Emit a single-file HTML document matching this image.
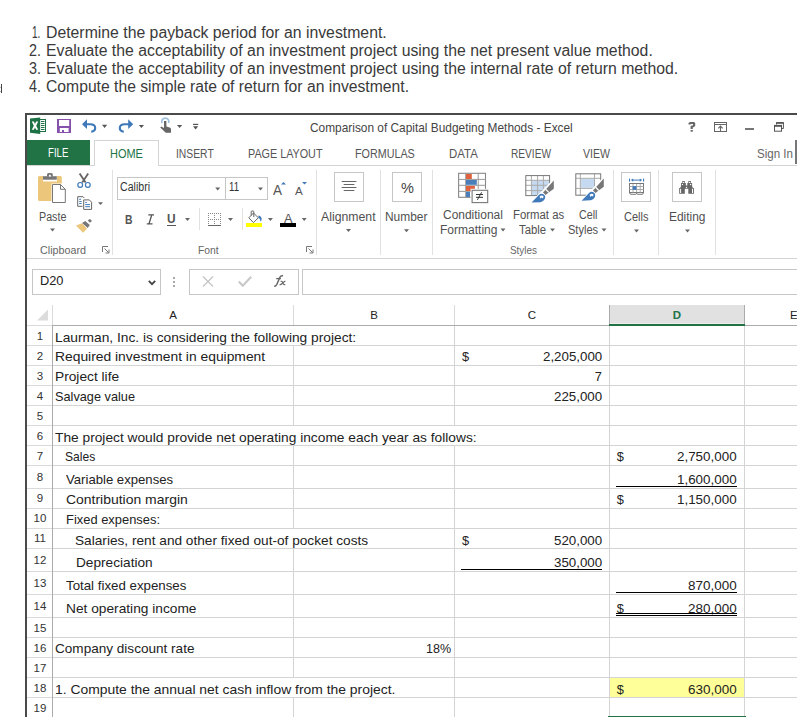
<!DOCTYPE html>
<html><head><meta charset="utf-8"><style>
html,body{margin:0;padding:0;background:#fff;width:797px;height:717px;overflow:hidden;}
body{position:relative;font-family:"Liberation Sans",sans-serif;}
svg{position:absolute;overflow:visible}
</style></head><body>
<div style="position:absolute;left:32.10px;top:22.53px;font-size:15.8px;line-height:20px;white-space:nowrap;color:#3a3a3a;transform:scaleX(0.6364);transform-origin:0 0;">1.</div>
<div style="position:absolute;left:46.00px;top:22.53px;font-size:15.8px;line-height:20px;white-space:nowrap;color:#3a3a3a;">Determine the payback period for an investment.</div>
<div style="position:absolute;left:28.50px;top:40.53px;font-size:15.8px;line-height:20px;white-space:nowrap;color:#3a3a3a;transform:scaleX(0.9091);transform-origin:0 0;">2.</div>
<div style="position:absolute;left:46.00px;top:40.53px;font-size:15.8px;line-height:20px;white-space:nowrap;color:#3a3a3a;">Evaluate the acceptability of an investment project using the net present value method.</div>
<div style="position:absolute;left:28.50px;top:58.53px;font-size:15.8px;line-height:20px;white-space:nowrap;color:#3a3a3a;transform:scaleX(0.9091);transform-origin:0 0;">3.</div>
<div style="position:absolute;left:46.00px;top:58.53px;font-size:15.8px;line-height:20px;white-space:nowrap;color:#3a3a3a;">Evaluate the acceptability of an investment project using the internal rate of return method.</div>
<div style="position:absolute;left:28.50px;top:76.53px;font-size:15.8px;line-height:20px;white-space:nowrap;color:#3a3a3a;transform:scaleX(0.9091);transform-origin:0 0;">4.</div>
<div style="position:absolute;left:46.00px;top:76.53px;font-size:15.8px;line-height:20px;white-space:nowrap;color:#3a3a3a;transform:scaleX(0.9938);transform-origin:0 0;">Compute the simple rate of return for an investment.</div>
<div style="position:absolute;left:1px;top:84px;width:1px;height:9px;background:#444"></div><div style="position:absolute;left:0;top:87px;width:1px;height:1px;background:#bbb"></div><div style="position:absolute;left:0;top:91px;width:1px;height:1px;background:#bbb"></div>
<div style="position:absolute;left:25px;top:113px;width:772px;height:2px;background:#4a4a4a;"></div>
<div style="position:absolute;left:25px;top:113px;width:2px;height:604px;background:#4a4a4a;"></div>
<div style="position:absolute;left:310.00px;top:117.93px;font-size:12.6px;line-height:20px;white-space:nowrap;color:#444;transform:scaleX(0.9431);transform-origin:0 0;">Comparison of Capital Budgeting Methods - Excel</div>
<div style="position:absolute;left:27px;top:140px;width:63px;height:25px;background:#217346;"></div>
<div style="position:absolute;left:47.50px;top:142.56px;font-size:12.8px;line-height:20px;white-space:nowrap;color:#fff;transform:scaleX(0.7542);transform-origin:0 0;">FILE</div>
<div style="position:absolute;left:94px;top:140px;width:1px;height:26px;background:#d4d4d4;"></div>
<div style="position:absolute;left:94px;top:140px;width:65px;height:1px;background:#d4d4d4;"></div>
<div style="position:absolute;left:158px;top:140px;width:1px;height:26px;background:#d4d4d4;"></div>
<div style="position:absolute;left:27px;top:165px;width:67px;height:1px;background:#d4d4d4;"></div>
<div style="position:absolute;left:159px;top:165px;width:638px;height:1px;background:#d4d4d4;"></div>
<div style="position:absolute;left:110.00px;top:143.56px;font-size:12.8px;line-height:20px;white-space:nowrap;color:#217346;transform:scaleX(0.8568);transform-origin:0 0;">HOME</div>
<div style="position:absolute;left:175.80px;top:143.56px;font-size:12.8px;line-height:20px;white-space:nowrap;color:#555;transform:scaleX(0.8073);transform-origin:0 0;">INSERT</div>
<div style="position:absolute;left:247.50px;top:143.56px;font-size:12.8px;line-height:20px;white-space:nowrap;color:#555;transform:scaleX(0.8423);transform-origin:0 0;">PAGE LAYOUT</div>
<div style="position:absolute;left:355.40px;top:143.56px;font-size:12.8px;line-height:20px;white-space:nowrap;color:#555;transform:scaleX(0.8411);transform-origin:0 0;">FORMULAS</div>
<div style="position:absolute;left:449.30px;top:143.56px;font-size:12.8px;line-height:20px;white-space:nowrap;color:#555;transform:scaleX(0.8930);transform-origin:0 0;">DATA</div>
<div style="position:absolute;left:511.00px;top:143.56px;font-size:12.8px;line-height:20px;white-space:nowrap;color:#555;transform:scaleX(0.7921);transform-origin:0 0;">REVIEW</div>
<div style="position:absolute;left:583.00px;top:143.56px;font-size:12.8px;line-height:20px;white-space:nowrap;color:#555;transform:scaleX(0.8257);transform-origin:0 0;">VIEW</div>
<div style="position:absolute;left:756.60px;top:143.56px;font-size:12.8px;line-height:20px;white-space:nowrap;color:#666;transform:scaleX(0.9034);transform-origin:0 0;">Sign In</div>
<div style="position:absolute;left:795px;top:140px;width:2px;height:24px;background:#777;"></div>
<div style="position:absolute;left:27px;top:258px;width:770px;height:1px;background:#d4d4d4;"></div>
<div style="position:absolute;left:38.50px;top:206.84px;font-size:12px;line-height:20px;white-space:nowrap;color:#505050;transform:scaleX(0.8925);transform-origin:0 0;">Paste</div>
<div style="position:absolute;left:39.60px;top:239.72px;font-size:11.5px;line-height:20px;white-space:nowrap;color:#666;transform:scaleX(0.9350);transform-origin:0 0;">Clipboard</div>
<div style="position:absolute;left:112px;top:170px;width:1px;height:85px;background:#e1e1e1;"></div>
<div style="position:absolute;left:117px;top:177px;width:107px;height:21px;border:1px solid #c6c6c6;"></div>
<div style="position:absolute;left:225px;top:177px;width:41px;height:21px;border:1px solid #c6c6c6;"></div>
<div style="position:absolute;left:120.20px;top:177.34px;font-size:12px;line-height:20px;white-space:nowrap;color:#333;transform:scaleX(0.8824);transform-origin:0 0;">Calibri</div>
<div style="position:absolute;left:229.00px;top:177.34px;font-size:12px;line-height:20px;white-space:nowrap;color:#333;transform:scaleX(0.8032);transform-origin:0 0;">11</div>
<div style="position:absolute;left:273.40px;top:179.80px;font-size:15px;line-height:20px;white-space:nowrap;color:#555;transform:scaleX(0.9000);transform-origin:0 0;">A</div>
<div style="position:absolute;left:295.00px;top:181.02px;font-size:11.5px;line-height:20px;white-space:nowrap;color:#555;transform:scaleX(1.0065);transform-origin:0 0;">A</div>
<div style="position:absolute;left:124.50px;top:209.67px;font-size:12.5px;line-height:20px;white-space:nowrap;color:#555;transform:scaleX(0.8287);transform-origin:0 0;font-weight:bold;">B</div>
<div style="position:absolute;left:167.40px;top:208.67px;font-size:12.5px;line-height:20px;white-space:nowrap;color:#555;transform:scaleX(0.9503);transform-origin:0 0;font-weight:bold;">U</div>
<div style="position:absolute;left:167.4px;top:224.6px;width:8.6px;height:1.2px;background:#555;"></div>
<div style="position:absolute;left:199px;top:208px;width:1px;height:22px;background:#e1e1e1;"></div>
<div style="position:absolute;left:242px;top:208px;width:1px;height:22px;background:#e1e1e1;"></div>
<div style="position:absolute;left:246px;top:223px;width:16px;height:3.6px;background:#ffff00;"></div>
<div style="position:absolute;left:283.70px;top:208.67px;font-size:12.5px;line-height:20px;white-space:nowrap;color:#555;transform:scaleX(1.0180);transform-origin:0 0;">A</div>
<div style="position:absolute;left:280px;top:223px;width:16px;height:3.6px;background:#000;"></div>
<div style="position:absolute;left:197.80px;top:239.72px;font-size:11.5px;line-height:20px;white-space:nowrap;color:#666;transform:scaleX(0.8957);transform-origin:0 0;">Font</div>
<div style="position:absolute;left:316px;top:170px;width:1px;height:85px;background:#e1e1e1;"></div>
<div style="position:absolute;left:334px;top:172px;width:28px;height:28px;border:1px solid #c6c6c6;"></div>
<div style="position:absolute;left:321.00px;top:207.34px;font-size:12px;line-height:20px;white-space:nowrap;color:#505050;transform:scaleX(1.0234);transform-origin:0 0;">Alignment</div>
<div style="position:absolute;left:380px;top:170px;width:1px;height:85px;background:#e1e1e1;"></div>
<div style="position:absolute;left:392px;top:172px;width:28px;height:28px;border:1px solid #c6c6c6;"></div>
<div style="position:absolute;left:401.00px;top:178.45px;font-size:14px;line-height:20px;white-space:nowrap;color:#444;transform:scaleX(1.0361);transform-origin:0 0;">%</div>
<div style="position:absolute;left:385.40px;top:207.34px;font-size:12px;line-height:20px;white-space:nowrap;color:#505050;transform:scaleX(0.9930);transform-origin:0 0;">Number</div>
<div style="position:absolute;left:432px;top:170px;width:1px;height:85px;background:#e1e1e1;"></div>
<div style="position:absolute;left:443.40px;top:205.34px;font-size:12px;line-height:20px;white-space:nowrap;color:#505050;transform:scaleX(0.9975);transform-origin:0 0;">Conditional</div>
<div style="position:absolute;left:439.50px;top:220.34px;font-size:12px;line-height:20px;white-space:nowrap;color:#505050;transform:scaleX(1.0026);transform-origin:0 0;">Formatting</div>
<div style="position:absolute;left:512.50px;top:205.34px;font-size:12px;line-height:20px;white-space:nowrap;color:#505050;transform:scaleX(0.9481);transform-origin:0 0;">Format as</div>
<div style="position:absolute;left:519.30px;top:220.34px;font-size:12px;line-height:20px;white-space:nowrap;color:#505050;transform:scaleX(0.9443);transform-origin:0 0;">Table</div>
<div style="position:absolute;left:578.80px;top:205.34px;font-size:12px;line-height:20px;white-space:nowrap;color:#505050;transform:scaleX(0.8910);transform-origin:0 0;">Cell</div>
<div style="position:absolute;left:567.50px;top:220.34px;font-size:12px;line-height:20px;white-space:nowrap;color:#505050;transform:scaleX(0.9205);transform-origin:0 0;">Styles</div>
<div style="position:absolute;left:509.60px;top:239.72px;font-size:11.5px;line-height:20px;white-space:nowrap;color:#666;transform:scaleX(0.8626);transform-origin:0 0;">Styles</div>
<div style="position:absolute;left:613px;top:170px;width:1px;height:85px;background:#e1e1e1;"></div>
<div style="position:absolute;left:621px;top:172px;width:28px;height:28px;border:1px solid #c6c6c6;"></div>
<div style="position:absolute;left:623.90px;top:207.34px;font-size:12px;line-height:20px;white-space:nowrap;color:#505050;transform:scaleX(0.9193);transform-origin:0 0;">Cells</div>
<div style="position:absolute;left:658px;top:170px;width:1px;height:85px;background:#e1e1e1;"></div>
<div style="position:absolute;left:672px;top:172px;width:28px;height:28px;border:1px solid #c6c6c6;"></div>
<div style="position:absolute;left:668.70px;top:207.34px;font-size:12px;line-height:20px;white-space:nowrap;color:#505050;transform:scaleX(0.9946);transform-origin:0 0;">Editing</div>
<div style="position:absolute;left:715px;top:170px;width:1px;height:85px;background:#e1e1e1;"></div>
<svg style="left:0;top:0" width="797" height="717" viewBox="0 0 797 717"><path d="M30 118.6 L40.2 117.4 L40.2 134 L30 132.8 Z" fill="#1e7145"/><rect x="40" y="119" width="6" height="13" fill="#1e7145"/><rect x="40.2" y="120" width="4.8" height="11" fill="#fff"/><rect x="41" y="121" width="3.5" height="1" fill="#1e7145"/><rect x="41" y="123" width="3.5" height="1" fill="#1e7145"/><rect x="41" y="125" width="3.5" height="1" fill="#1e7145"/><rect x="41" y="127" width="3.5" height="1" fill="#1e7145"/><rect x="41" y="129" width="3.5" height="1" fill="#1e7145"/><path d="M31.8 121.6 L33.9 121.6 L35 123.9 L36.1 121.6 L38.2 121.6 L36.2 125.7 L38.2 129.8 L36.1 129.8 L35 127.5 L33.9 129.8 L31.8 129.8 L33.8 125.7 Z" fill="#fff"/><path d="M57 119 H71 V133 H57 Z M59 120.1 V125.9 H69.2 V120.1 Z M59.8 128 V132 H62 V129.9 H64 V132 H68.6 V128 Z" fill="#8551ac" fill-rule="evenodd"/><path d="M84.5 124.2 H90.3 C93.8 124.2 95.2 126.2 95.2 128.1 C95.2 130.3 93.6 131.5 91.2 131.7" fill="none" stroke="#3f79ba" stroke-width="2.1"/><path d="M82 124.2 L87 119.3 L87 129.1 Z" fill="#3f79ba"/><path d="M102 124.8 H107.2 L104.6 128.0 Z" fill="#555"/><path d="M130.5 124.2 H124.7 C121.2 124.2 119.8 126.2 119.8 128.1 C119.8 130.3 121.4 131.5 123.8 131.7" fill="none" stroke="#3f79ba" stroke-width="2.1"/><path d="M133.2 124.2 L128.2 119.3 L128.2 129.1 Z" fill="#3f79ba"/><path d="M138.8 124.9 H144.0 L141.4 128.1 Z" fill="#555"/><path d="M162 123.2 A3.6 3.6 0 1 1 168.6 123.2" fill="none" stroke="#9ec0e0" stroke-width="1.7"/><path d="M164 120.9 H166.4 V126.5 L169.6 127.4 C170.6 127.8 171 128.4 171 129.4 V132.8 H165.8 L160.2 127.5 L161.2 126.6 L164 128 Z" fill="#666"/><path d="M177 124.9 H182.2 L179.6 128.1 Z" fill="#555"/><rect x="193" y="123.8" width="5.2" height="1.2" fill="#555"/><path d="M193 126.3 H198.2 L195.6 129.6 Z" fill="#555"/><path d="M688.5 124.5 V123 L690 122 H694 L695.2 123 V126 L693.5 127.2 H692.8 V129 H690.6 V126.2 L691.6 125.6 H693 V123.9 H690.7 V124.5 Z" fill="#666"/><rect x="690.6" y="130" width="2.2" height="1.7" fill="#666"/><rect x="714.5" y="122.5" width="12" height="9" fill="none" stroke="#666" stroke-width="1"/><path d="M714.5 124.5 H726.5" stroke="#666" stroke-width="1"/><path d="M720.5 126 V131.5 M718.3 128.3 L720.5 126.1 L722.7 128.3" fill="none" stroke="#666" stroke-width="1.1"/><rect x="745" y="128.2" width="9" height="1.6" fill="#555"/><path d="M776.5 124.5 V122.6 H783.4 V128.5 H781.6" fill="none" stroke="#555" stroke-width="1"/><rect x="776.2" y="122.2" width="7.5" height="1.6" fill="#555"/><rect x="774.5" y="125.4" width="7" height="5.8" fill="#fff" stroke="#555" stroke-width="1"/><rect x="774.2" y="125.1" width="7.6" height="1.7" fill="#555"/><path d="M39.5 176 H43 V181.5 H57 V176 H60.3 Q61.8 176 61.8 177.5 V183.5 H51.5 V201 H39.5 Q38 201 38 199.5 V177.5 Q38 176 39.5 176 Z" fill="#ecc67a"/><path d="M43 176.2 H56.8 V179.7 H43 Z" fill="#777"/><path d="M47 176.5 V174.5 Q47 173 48.5 173 H51.3 Q52.8 173 52.8 174.5 V176.5 Z" fill="#777"/><rect x="49" y="174.8" width="1.8" height="1.8" fill="#fff"/><path d="M52.5 184.5 H60.5 L65.3 189.3 V202.5 H52.5 Z" fill="#fff" stroke="#777" stroke-width="1"/><path d="M60.5 184.5 V189.3 H65.3" fill="none" stroke="#777" stroke-width="1"/><path d="M50 228.5 H55 L52.5 231.5 Z" fill="#666"/><path d="M79.6 173.4 L85.6 182.6 M88.2 173.4 L82.2 182.6" stroke="#666" stroke-width="1.8" fill="none"/><circle cx="80.2" cy="184.9" r="2.4" fill="#fff" stroke="#3f79ba" stroke-width="1.2"/><circle cx="87.8" cy="184.9" r="2.4" fill="#fff" stroke="#3f79ba" stroke-width="1.2"/><path d="M77.7 206.3 V196.7 H83 L84.3 198" fill="none" stroke="#666" stroke-width="1"/><path d="M77.7 206.3 H82.5" fill="none" stroke="#666" stroke-width="1"/><path d="M79.2 199.3 H81 M79.2 201.5 H81.6 M79.2 203.5 H81.6" stroke="#3f79ba" stroke-width="1"/><path d="M83.7 199.9 H89.3 L91.6 202.2 V209.4 H83.7 Z" fill="#fff" stroke="#666" stroke-width="1"/><path d="M85.2 202.4 H86.9 M85.2 204.6 H90 M85.2 206.7 H90" stroke="#3f79ba" stroke-width="1"/><path d="M98 202.2 H103 L100.5 205.0 Z" fill="#666"/><path d="M76 225.5 L82.1 223.3 L87 228.8 L83 232.8 Z" fill="#ecc67a"/><path d="M82.1 223 L85.2 220.9 L89.8 225.1 L87.7 227.9 Z" fill="#777"/><path d="M87.7 220.2 L90.1 219 L92 220.9 L89.8 222.7 Z" fill="#777"/><path d="M102.5 252 V246.5 H108" fill="none" stroke="#777" stroke-width="1"/><path d="M104.5 248.5 L108.5 252.5 M109 249.5 V253 H105.5" fill="none" stroke="#777" stroke-width="1"/><path d="M215.2 187.5 H220.2 L217.7 190.5 Z" fill="#666"/><path d="M258 187.5 H263 L260.5 190.5 Z" fill="#666"/><path d="M281 184.5 H286 L283.5 182 Z" fill="#3f79ba"/><path d="M302 182 H307 L304.5 184.5 Z" fill="#3f79ba"/><path d="M148.3 214.8 H154 M146.8 223.8 H152.5 M151.8 214.8 L149 223.8" stroke="#555" stroke-width="1.3" fill="none"/><path d="M185 218 H190 L187.5 221 Z" fill="#666"/><rect x="208" y="213" width="1" height="1" fill="#888"/><rect x="208" y="219" width="1" height="1" fill="#888"/><rect x="210" y="213" width="1" height="1" fill="#888"/><rect x="210" y="219" width="1" height="1" fill="#888"/><rect x="212" y="213" width="1" height="1" fill="#888"/><rect x="212" y="219" width="1" height="1" fill="#888"/><rect x="214" y="213" width="1" height="1" fill="#888"/><rect x="214" y="219" width="1" height="1" fill="#888"/><rect x="216" y="213" width="1" height="1" fill="#888"/><rect x="216" y="219" width="1" height="1" fill="#888"/><rect x="218" y="213" width="1" height="1" fill="#888"/><rect x="218" y="219" width="1" height="1" fill="#888"/><rect x="220" y="213" width="1" height="1" fill="#888"/><rect x="220" y="219" width="1" height="1" fill="#888"/><rect x="208" y="213" width="1" height="1" fill="#888"/><rect x="214" y="213" width="1" height="1" fill="#888"/><rect x="220" y="213" width="1" height="1" fill="#888"/><rect x="208" y="215" width="1" height="1" fill="#888"/><rect x="214" y="215" width="1" height="1" fill="#888"/><rect x="220" y="215" width="1" height="1" fill="#888"/><rect x="208" y="217" width="1" height="1" fill="#888"/><rect x="214" y="217" width="1" height="1" fill="#888"/><rect x="220" y="217" width="1" height="1" fill="#888"/><rect x="208" y="219" width="1" height="1" fill="#888"/><rect x="214" y="219" width="1" height="1" fill="#888"/><rect x="220" y="219" width="1" height="1" fill="#888"/><rect x="208" y="221" width="1" height="1" fill="#888"/><rect x="214" y="221" width="1" height="1" fill="#888"/><rect x="220" y="221" width="1" height="1" fill="#888"/><rect x="208" y="223" width="1" height="1" fill="#888"/><rect x="214" y="223" width="1" height="1" fill="#888"/><rect x="220" y="223" width="1" height="1" fill="#888"/><rect x="208" y="225" width="13" height="1" fill="#666"/><path d="M228 218 H233 L230.5 221 Z" fill="#666"/><path d="M248.8 217.8 L253.5 213 L258.3 217.8 L253.5 222.6 Z" fill="#fff" stroke="#666" stroke-width="1"/><path d="M251.2 215.5 V211.8 Q251.2 211 252 211 H253 Q253.8 211 253.8 211.8 V217" fill="none" stroke="#666" stroke-width="1"/><path d="M258.4 215.4 C260.8 216 262 217.5 261.6 220.2 L260 221.5 C260.6 219.5 259.8 218.4 258.4 218 Z" fill="#3f79ba"/><path d="M267.9 218 H272.9 L270.4 221 Z" fill="#666"/><path d="M301.7 218 H306.7 L304.2 221 Z" fill="#666"/><path d="M306.5 252 V246.5 H312" fill="none" stroke="#777" stroke-width="1"/><path d="M308.5 248.5 L312.5 252.5 M313 249.5 V253 H309.5" fill="none" stroke="#777" stroke-width="1"/><path d="M341.7 181.5 H356.4 M343.7 184.5 H354.4 M341.7 187.5 H356.4 M343.7 190.5 H354.4" stroke="#666" stroke-width="1"/><path d="M346 229 H351 L348.5 232 Z" fill="#666"/><path d="M404 229.2 H409 L406.5 232.2 Z" fill="#666"/><rect x="458.6" y="173.3" width="26.9" height="24" fill="#fff" stroke="#888" stroke-width="1.1"/><path d="M465.7 173.3 V197.3 M478.2 173.3 V197.3 M458.6 179.4 H485.5 M458.6 185.3 H485.5 M458.6 191.4 H485.5" stroke="#999" stroke-width="1"/><rect x="466" y="174" width="5.8" height="5" fill="#e0623e"/><rect x="466" y="180" width="10.8" height="4.8" fill="#4a7ebb"/><rect x="466" y="186" width="8.9" height="5" fill="#e0623e"/><rect x="466" y="192" width="4" height="5" fill="#4a7ebb"/><rect x="472.1" y="190.3" width="15.6" height="12.3" fill="#fff" stroke="#fff" stroke-width="3"/><rect x="472.1" y="190.3" width="15.6" height="12.3" fill="#fff" stroke="#777" stroke-width="1.1"/><path d="M476 194.5 H483 M476 197.3 H483 M481.6 192.3 L477.4 199.8" stroke="#333" stroke-width="1"/><path d="M500.5 228.5 H505.5 L503.0 231.5 Z" fill="#666"/><rect x="525.8" y="175.6" width="23.8" height="20" fill="#fff"/><rect x="531.4" y="180.3" width="18.2" height="15.3" fill="#c5d9f1"/><path d="M531.4 175.6 V195.6 M537.6 175.6 V195.6 M543.4 175.6 V195.6 M525.8 180.3 H549.6 M525.8 185.3 H549.6 M525.8 190.6 H549.6" stroke="#aaa" stroke-width="1"/><rect x="525.8" y="175.6" width="23.8" height="20" fill="none" stroke="#777" stroke-width="1"/><path d="M536.30 196.80 L551.00 181.50 L552.60 181.50 L552.60 198.00 L536.30 198.00 Z" fill="#fff"/><path d="M553.80 180.40 L553.80 188.70 L545.40 194.90 L543.00 192.40 Z" fill="#777" stroke="#fff" stroke-width="1.6" paint-order="stroke"/><path d="M545.60 189.20 L548.80 192.40" stroke="#fff" stroke-width="1.3"/><path d="M531.60 202.60 L539.30 194.60 C541.00 193.00 544.60 193.60 545.10 196.60 C545.40 199.20 543.40 201.60 540.50 202.20 Z" fill="#3f79ba" stroke="#fff" stroke-width="1.6" paint-order="stroke"/><path d="M539.60 196.80 C540.60 195.40 542.60 195.20 543.50 196.40 L543.00 198.40 L541.60 197.60 L540.60 198.80 Z" fill="#fff"/><path d="M550 228.5 H555 L552.5 231.5 Z" fill="#666"/><rect x="575.8" y="173.8" width="24.9" height="21.4" fill="#fff"/><rect x="580.9" y="178.9" width="13.1" height="8.9" fill="#c5d9f1"/><path d="M580.3 173.8 V195.2 M594.5 173.8 V195.2 M575.8 178.3 H600.7 M575.8 188.4 H600.7" stroke="#aaa" stroke-width="1"/><rect x="575.8" y="173.8" width="24.9" height="21.4" fill="none" stroke="#777" stroke-width="1"/><path d="M586.30 194.90 L601.00 179.60 L602.60 179.60 L602.60 196.10 L586.30 196.10 Z" fill="#fff"/><path d="M603.80 178.50 L603.80 186.80 L595.40 193.00 L593.00 190.50 Z" fill="#777" stroke="#fff" stroke-width="1.6" paint-order="stroke"/><path d="M595.60 187.30 L598.80 190.50" stroke="#fff" stroke-width="1.3"/><path d="M581.60 200.70 L589.30 192.70 C591.00 191.10 594.60 191.70 595.10 194.70 C595.40 197.30 593.40 199.70 590.50 200.30 Z" fill="#3f79ba" stroke="#fff" stroke-width="1.6" paint-order="stroke"/><path d="M589.60 194.90 C590.60 193.50 592.60 193.30 593.50 194.50 L593.00 196.50 L591.60 195.70 L590.60 196.90 Z" fill="#fff"/><path d="M601.5 228.5 H606.5 L604.0 231.5 Z" fill="#666"/><rect x="629" y="178.6" width="1.1" height="3" fill="#3f79ba"/><rect x="643" y="178.6" width="1.1" height="3" fill="#3f79ba"/><path d="M632 180.1 H641" stroke="#3f79ba" stroke-width="1"/><path d="M633.2 178.4 L630.9 180.1 L633.2 181.8 Z M639.8 178.4 L642.1 180.1 L639.8 181.8 Z" fill="#3f79ba"/><rect x="629.5" y="183.5" width="14" height="9" fill="#fff" stroke="#777" stroke-width="1"/><path d="M633 183.5 V192.5 M636.6 183.5 V192.5 M640.2 183.5 V192.5 M629.5 186.5 H643.5 M629.5 189.5 H643.5" stroke="#aaa" stroke-width="1"/><path d="M629.5 183.5 H643.5" stroke="#777" stroke-width="1"/><rect x="632.6" y="186.2" width="3.8" height="3.6" fill="#3f79ba"/><path d="M629.6 192.6 Q629.6 194.3 631 194.3 H635.8 Q636.6 194.3 636.6 192.8 Q636.6 194.3 637.6 194.3 H642 Q643.4 194.3 643.4 192.6" fill="none" stroke="#777" stroke-width="1"/><path d="M634 229.5 H639 L636.5 232.5 Z" fill="#666"/><path d="M679.2 193.8 V188.1 H680.4 V186.8 H681 V183 H682.2 V181.1 H684.8 V183 H685.8 V185.5 H687.3 V183 H688.3 V181.1 H690.9 V183 H692.1 V186.8 H692.7 V188.1 H693.9 V193.8 H688.3 V188.7 H684.8 V193.8 Z" fill="#666"/><rect x="680.1" y="188.8" width="1" height="4.2" fill="#fff"/><rect x="692" y="188.8" width="1" height="4.2" fill="#fff"/><circle cx="683.5" cy="182.4" r="0.7" fill="#fff"/><circle cx="682.5" cy="184.5" r="0.7" fill="#fff"/><circle cx="686.5" cy="187.4" r="0.7" fill="#fff"/><circle cx="689.6" cy="182.4" r="0.7" fill="#fff"/><circle cx="690.6" cy="184.5" r="0.7" fill="#fff"/><path d="M685 229.5 H690 L687.5 232.5 Z" fill="#666"/></svg>
<div style="position:absolute;left:32px;top:269px;width:127px;height:24px;border:1px solid #c6c6c6;background:#fff"></div>
<div style="position:absolute;left:39.80px;top:270.67px;font-size:12.5px;line-height:20px;white-space:nowrap;color:#222;transform:scaleX(1.0240);transform-origin:0 0;">D20</div>
<svg style="left:147.5px;top:279.5px" width="8" height="6" viewBox="0 0 8 6"><path d="M0.8 0.8 L4 4.2 L7.2 0.8" fill="none" stroke="#444" stroke-width="1.8"/></svg>
<div style="position:absolute;left:173px;top:277px;width:1.5px;height:1.5px;background:#aaa;"></div>
<div style="position:absolute;left:173px;top:281px;width:1.5px;height:1.5px;background:#aaa;"></div>
<div style="position:absolute;left:173px;top:285px;width:1.5px;height:1.5px;background:#aaa;"></div>
<div style="position:absolute;left:189px;top:269px;width:108px;height:24px;border:1px solid #c6c6c6;background:#fff"></div>
<svg style="left:202px;top:276px" width="12" height="11" viewBox="0 0 12 11"><path d="M1 0.5 L11 10.5 M11 0.5 L1 10.5" stroke="#c4c4c4" stroke-width="1.2"/></svg>
<svg style="left:237.5px;top:276px" width="14" height="11" viewBox="0 0 14 11"><path d="M0.8 5.5 L4.8 9.8 L13.2 0.8" fill="none" stroke="#c8c8c8" stroke-width="2.1"/></svg>
<svg style="left:0;top:0" width="797" height="717"><path d="M274.3 286 Q275.8 286.6 276.9 284.2 L279.9 277.2 Q280.8 275.3 283 275.7" fill="none" stroke="#666" stroke-width="1.5"/><path d="M276.2 278.6 H280.9" stroke="#666" stroke-width="1.3"/><path d="M280.6 281.3 Q282 281 282.6 282.3 L283.4 284 Q283.8 284.8 285.3 284.5 M285.4 281.4 Q284.6 281.2 283.2 282.6 L281.6 284 Q280.8 284.8 279.6 284.6" fill="none" stroke="#666" stroke-width="1.2"/></svg>
<div style="position:absolute;left:302px;top:269px;width:520px;height:24px;border:1px solid #c6c6c6;background:#fff"></div>
<svg style="left:36px;top:309px" width="13" height="12" viewBox="0 0 13 12"><path d="M12 0.5 V11.5 H1 Z" fill="#dcdcdc"/></svg>
<div style="position:absolute;left:610px;top:305px;width:134px;height:18px;background:#e1e1e1;"></div>
<div style="position:absolute;left:610px;top:323px;width:134px;height:1px;background:#f0ecec;"></div>
<div style="position:absolute;left:52px;top:305px;width:1px;height:20px;background:#dadada;"></div>
<div style="position:absolute;left:293px;top:305px;width:1px;height:20px;background:#dadada;"></div>
<div style="position:absolute;left:454px;top:305px;width:1px;height:20px;background:#dadada;"></div>
<div style="position:absolute;left:609px;top:305px;width:1px;height:20px;background:#ababab;"></div>
<div style="position:absolute;left:744px;top:305px;width:1px;height:20px;background:#ababab;"></div>
<div style="position:absolute;left:27px;top:325px;width:25px;height:1px;background:#dadada;"></div>
<div style="position:absolute;left:52px;top:325px;width:558px;height:1px;background:#ababab;"></div>
<div style="position:absolute;left:744px;top:325px;width:53px;height:1px;background:#ababab;"></div>
<div style="position:absolute;left:609px;top:324px;width:136px;height:2px;background:#217346;"></div>
<div style="position:absolute;left:27px;top:345px;width:25px;height:1px;background:#dadada;"></div>
<div style="position:absolute;left:53px;top:345px;width:744px;height:1px;background:#d4d4d4;"></div>
<div style="position:absolute;left:27px;top:365px;width:25px;height:1px;background:#dadada;"></div>
<div style="position:absolute;left:53px;top:365px;width:744px;height:1px;background:#d4d4d4;"></div>
<div style="position:absolute;left:27px;top:385px;width:25px;height:1px;background:#dadada;"></div>
<div style="position:absolute;left:53px;top:385px;width:744px;height:1px;background:#d4d4d4;"></div>
<div style="position:absolute;left:27px;top:405px;width:25px;height:1px;background:#dadada;"></div>
<div style="position:absolute;left:53px;top:405px;width:744px;height:1px;background:#d4d4d4;"></div>
<div style="position:absolute;left:27px;top:425px;width:25px;height:1px;background:#dadada;"></div>
<div style="position:absolute;left:53px;top:425px;width:744px;height:1px;background:#d4d4d4;"></div>
<div style="position:absolute;left:27px;top:445px;width:25px;height:1px;background:#dadada;"></div>
<div style="position:absolute;left:53px;top:445px;width:744px;height:1px;background:#d4d4d4;"></div>
<div style="position:absolute;left:27px;top:465px;width:25px;height:1px;background:#dadada;"></div>
<div style="position:absolute;left:53px;top:465px;width:744px;height:1px;background:#d4d4d4;"></div>
<div style="position:absolute;left:27px;top:488px;width:25px;height:1px;background:#dadada;"></div>
<div style="position:absolute;left:53px;top:488px;width:744px;height:1px;background:#d4d4d4;"></div>
<div style="position:absolute;left:27px;top:508px;width:25px;height:1px;background:#dadada;"></div>
<div style="position:absolute;left:53px;top:508px;width:744px;height:1px;background:#d4d4d4;"></div>
<div style="position:absolute;left:27px;top:528px;width:25px;height:1px;background:#dadada;"></div>
<div style="position:absolute;left:53px;top:528px;width:744px;height:1px;background:#d4d4d4;"></div>
<div style="position:absolute;left:27px;top:548px;width:25px;height:1px;background:#dadada;"></div>
<div style="position:absolute;left:53px;top:548px;width:744px;height:1px;background:#d4d4d4;"></div>
<div style="position:absolute;left:27px;top:571px;width:25px;height:1px;background:#dadada;"></div>
<div style="position:absolute;left:53px;top:571px;width:744px;height:1px;background:#d4d4d4;"></div>
<div style="position:absolute;left:27px;top:594px;width:25px;height:1px;background:#dadada;"></div>
<div style="position:absolute;left:53px;top:594px;width:744px;height:1px;background:#d4d4d4;"></div>
<div style="position:absolute;left:27px;top:617px;width:25px;height:1px;background:#dadada;"></div>
<div style="position:absolute;left:53px;top:617px;width:744px;height:1px;background:#d4d4d4;"></div>
<div style="position:absolute;left:27px;top:637px;width:25px;height:1px;background:#dadada;"></div>
<div style="position:absolute;left:53px;top:637px;width:744px;height:1px;background:#d4d4d4;"></div>
<div style="position:absolute;left:27px;top:657px;width:25px;height:1px;background:#dadada;"></div>
<div style="position:absolute;left:53px;top:657px;width:744px;height:1px;background:#d4d4d4;"></div>
<div style="position:absolute;left:27px;top:677px;width:25px;height:1px;background:#dadada;"></div>
<div style="position:absolute;left:53px;top:677px;width:744px;height:1px;background:#d4d4d4;"></div>
<div style="position:absolute;left:27px;top:697px;width:25px;height:1px;background:#dadada;"></div>
<div style="position:absolute;left:53px;top:697px;width:744px;height:1px;background:#d4d4d4;"></div>
<div style="position:absolute;left:27px;top:717px;width:25px;height:1px;background:#dadada;"></div>
<div style="position:absolute;left:53px;top:717px;width:744px;height:1px;background:#d4d4d4;"></div>
<div style="position:absolute;left:52px;top:326px;width:1px;height:391px;background:#ababab;"></div>
<div style="position:absolute;left:293px;top:345px;width:1px;height:81px;background:#d4d4d4;"></div>
<div style="position:absolute;left:293px;top:445px;width:1px;height:84px;background:#d4d4d4;"></div>
<div style="position:absolute;left:293px;top:548px;width:1px;height:130px;background:#d4d4d4;"></div>
<div style="position:absolute;left:293px;top:697px;width:1px;height:20px;background:#d4d4d4;"></div>
<div style="position:absolute;left:454px;top:326px;width:1px;height:100px;background:#d4d4d4;"></div>
<div style="position:absolute;left:454px;top:445px;width:1px;height:272px;background:#d4d4d4;"></div>
<div style="position:absolute;left:609px;top:326px;width:1px;height:391px;background:#d4d4d4;"></div>
<div style="position:absolute;left:744px;top:326px;width:1px;height:391px;background:#d4d4d4;"></div>
<div style="position:absolute;left:169.18px;top:305.02px;font-size:11.5px;line-height:20px;white-space:nowrap;color:#222;">A</div>
<div style="position:absolute;left:370.18px;top:305.02px;font-size:11.5px;line-height:20px;white-space:nowrap;color:#222;">B</div>
<div style="position:absolute;left:527.85px;top:305.02px;font-size:11.5px;line-height:20px;white-space:nowrap;color:#222;">C</div>
<div style="position:absolute;left:672.85px;top:305.02px;font-size:11.5px;line-height:20px;white-space:nowrap;color:#217346;font-weight:bold;">D</div>
<div style="position:absolute;left:790.10px;top:305.02px;font-size:11.5px;line-height:20px;white-space:nowrap;color:#222;">E</div>
<div style="position:absolute;left:36.80px;top:326.02px;font-size:11.5px;line-height:20px;white-space:nowrap;color:#333;">1</div>
<div style="position:absolute;left:36.80px;top:346.02px;font-size:11.5px;line-height:20px;white-space:nowrap;color:#333;">2</div>
<div style="position:absolute;left:36.80px;top:366.02px;font-size:11.5px;line-height:20px;white-space:nowrap;color:#333;">3</div>
<div style="position:absolute;left:36.80px;top:386.02px;font-size:11.5px;line-height:20px;white-space:nowrap;color:#333;">4</div>
<div style="position:absolute;left:36.80px;top:406.02px;font-size:11.5px;line-height:20px;white-space:nowrap;color:#333;">5</div>
<div style="position:absolute;left:36.80px;top:426.02px;font-size:11.5px;line-height:20px;white-space:nowrap;color:#333;">6</div>
<div style="position:absolute;left:36.80px;top:446.02px;font-size:11.5px;line-height:20px;white-space:nowrap;color:#333;">7</div>
<div style="position:absolute;left:36.80px;top:467.02px;font-size:11.5px;line-height:20px;white-space:nowrap;color:#333;">8</div>
<div style="position:absolute;left:36.80px;top:488.02px;font-size:11.5px;line-height:20px;white-space:nowrap;color:#333;">9</div>
<div style="position:absolute;left:33.60px;top:508.02px;font-size:11.5px;line-height:20px;white-space:nowrap;color:#333;">10</div>
<div style="position:absolute;left:34.02px;top:528.02px;font-size:11.5px;line-height:20px;white-space:nowrap;color:#333;">11</div>
<div style="position:absolute;left:33.60px;top:550.02px;font-size:11.5px;line-height:20px;white-space:nowrap;color:#333;">12</div>
<div style="position:absolute;left:33.60px;top:573.02px;font-size:11.5px;line-height:20px;white-space:nowrap;color:#333;">13</div>
<div style="position:absolute;left:33.60px;top:596.02px;font-size:11.5px;line-height:20px;white-space:nowrap;color:#333;">14</div>
<div style="position:absolute;left:33.60px;top:618.02px;font-size:11.5px;line-height:20px;white-space:nowrap;color:#333;">15</div>
<div style="position:absolute;left:33.60px;top:638.02px;font-size:11.5px;line-height:20px;white-space:nowrap;color:#333;">16</div>
<div style="position:absolute;left:33.60px;top:658.02px;font-size:11.5px;line-height:20px;white-space:nowrap;color:#333;">17</div>
<div style="position:absolute;left:33.60px;top:678.02px;font-size:11.5px;line-height:20px;white-space:nowrap;color:#333;">18</div>
<div style="position:absolute;left:33.60px;top:698.02px;font-size:11.5px;line-height:20px;white-space:nowrap;color:#333;">19</div>
<div style="position:absolute;left:610px;top:678px;width:134px;height:19px;background:#ffff99;"></div>
<div style="position:absolute;left:608px;top:716px;width:138px;height:2px;background:#217346;"></div>
<div style="position:absolute;left:55.30px;top:327.56px;font-size:12.8px;line-height:20px;white-space:nowrap;color:#222;transform:scaleX(1.0747);transform-origin:0 0;">Laurman, Inc. is considering the following project:</div>
<div style="position:absolute;left:55.20px;top:346.56px;font-size:12.8px;line-height:20px;white-space:nowrap;color:#222;transform:scaleX(1.0821);transform-origin:0 0;">Required investment in equipment</div>
<div style="position:absolute;left:55.20px;top:366.56px;font-size:12.8px;line-height:20px;white-space:nowrap;color:#222;transform:scaleX(1.0728);transform-origin:0 0;">Project life</div>
<div style="position:absolute;left:55.20px;top:386.56px;font-size:12.8px;line-height:20px;white-space:nowrap;color:#222;transform:scaleX(0.9950);transform-origin:0 0;">Salvage value</div>
<div style="position:absolute;left:55.30px;top:427.56px;font-size:12.8px;line-height:20px;white-space:nowrap;color:#222;transform:scaleX(1.0737);transform-origin:0 0;">The project would provide net operating income each year as follows:</div>
<div style="position:absolute;left:65.00px;top:446.56px;font-size:12.8px;line-height:20px;white-space:nowrap;color:#222;transform:scaleX(0.9437);transform-origin:0 0;">Sales</div>
<div style="position:absolute;left:65.70px;top:469.56px;font-size:12.8px;line-height:20px;white-space:nowrap;color:#222;transform:scaleX(1.0264);transform-origin:0 0;">Variable expenses</div>
<div style="position:absolute;left:65.50px;top:489.56px;font-size:12.8px;line-height:20px;white-space:nowrap;color:#222;transform:scaleX(1.0904);transform-origin:0 0;">Contribution margin</div>
<div style="position:absolute;left:65.70px;top:509.56px;font-size:12.8px;line-height:20px;white-space:nowrap;color:#222;transform:scaleX(1.0086);transform-origin:0 0;">Fixed expenses:</div>
<div style="position:absolute;left:75.10px;top:530.56px;font-size:12.8px;line-height:20px;white-space:nowrap;color:#222;transform:scaleX(1.0675);transform-origin:0 0;">Salaries, rent and other fixed out-of pocket costs</div>
<div style="position:absolute;left:75.70px;top:552.56px;font-size:12.8px;line-height:20px;white-space:nowrap;color:#222;transform:scaleX(1.0675);transform-origin:0 0;">Depreciation</div>
<div style="position:absolute;left:65.70px;top:575.56px;font-size:12.8px;line-height:20px;white-space:nowrap;color:#222;transform:scaleX(1.0379);transform-origin:0 0;">Total fixed expenses</div>
<div style="position:absolute;left:65.70px;top:598.56px;font-size:12.8px;line-height:20px;white-space:nowrap;color:#222;transform:scaleX(1.0727);transform-origin:0 0;">Net operating income</div>
<div style="position:absolute;left:54.80px;top:638.56px;font-size:12.8px;line-height:20px;white-space:nowrap;color:#222;transform:scaleX(1.0596);transform-origin:0 0;">Company discount rate</div>
<div style="position:absolute;left:55.00px;top:679.56px;font-size:12.8px;line-height:20px;white-space:nowrap;color:#222;transform:scaleX(1.0851);transform-origin:0 0;">1. Compute the annual net cash inflow from the project.</div>
<div style="position:absolute;left:425.90px;top:638.56px;font-size:12.8px;line-height:20px;white-space:nowrap;color:#222;transform:scaleX(0.9805);transform-origin:0 0;">18%</div>
<div style="position:absolute;left:542.50px;top:346.56px;font-size:12.8px;line-height:20px;white-space:nowrap;color:#222;transform:scaleX(1.0413);transform-origin:0 0;">2,205,000</div>
<div style="position:absolute;left:594.70px;top:366.56px;font-size:12.8px;line-height:20px;white-space:nowrap;color:#222;">7</div>
<div style="position:absolute;left:553.60px;top:386.56px;font-size:12.8px;line-height:20px;white-space:nowrap;color:#222;transform:scaleX(1.0422);transform-origin:0 0;">225,000</div>
<div style="position:absolute;left:553.60px;top:530.56px;font-size:12.8px;line-height:20px;white-space:nowrap;color:#222;transform:scaleX(1.0422);transform-origin:0 0;">520,000</div>
<div style="position:absolute;left:553.60px;top:552.56px;font-size:12.8px;line-height:20px;white-space:nowrap;color:#222;transform:scaleX(1.0422);transform-origin:0 0;">350,000</div>
<div style="position:absolute;left:462.00px;top:346.56px;font-size:12.8px;line-height:20px;white-space:nowrap;color:#222;">$</div>
<div style="position:absolute;left:462.00px;top:530.56px;font-size:12.8px;line-height:20px;white-space:nowrap;color:#222;">$</div>
<div style="position:absolute;left:677.20px;top:446.56px;font-size:12.8px;line-height:20px;white-space:nowrap;color:#222;transform:scaleX(1.0465);transform-origin:0 0;">2,750,000</div>
<div style="position:absolute;left:677.20px;top:469.56px;font-size:12.8px;line-height:20px;white-space:nowrap;color:#222;transform:scaleX(1.0465);transform-origin:0 0;">1,600,000</div>
<div style="position:absolute;left:677.20px;top:489.56px;font-size:12.8px;line-height:20px;white-space:nowrap;color:#222;transform:scaleX(1.0465);transform-origin:0 0;">1,150,000</div>
<div style="position:absolute;left:688.20px;top:575.56px;font-size:12.8px;line-height:20px;white-space:nowrap;color:#222;transform:scaleX(1.0508);transform-origin:0 0;">870,000</div>
<div style="position:absolute;left:688.20px;top:598.56px;font-size:12.8px;line-height:20px;white-space:nowrap;color:#222;transform:scaleX(1.0508);transform-origin:0 0;">280,000</div>
<div style="position:absolute;left:688.20px;top:679.56px;font-size:12.8px;line-height:20px;white-space:nowrap;color:#222;transform:scaleX(1.0508);transform-origin:0 0;">630,000</div>
<div style="position:absolute;left:616.80px;top:446.56px;font-size:12.8px;line-height:20px;white-space:nowrap;color:#222;">$</div>
<div style="position:absolute;left:616.80px;top:489.56px;font-size:12.8px;line-height:20px;white-space:nowrap;color:#222;">$</div>
<div style="position:absolute;left:616.80px;top:598.56px;font-size:12.8px;line-height:20px;white-space:nowrap;color:#222;">$</div>
<div style="position:absolute;left:616.80px;top:679.56px;font-size:12.8px;line-height:20px;white-space:nowrap;color:#222;">$</div>
<div style="position:absolute;left:461px;top:569px;width:141px;height:1px;background:#000;"></div>
<div style="position:absolute;left:616px;top:486px;width:121px;height:1px;background:#000;"></div>
<div style="position:absolute;left:616px;top:592px;width:121px;height:1px;background:#000;"></div>
<div style="position:absolute;left:616px;top:613px;width:121px;height:1px;background:#000;"></div>
<div style="position:absolute;left:616px;top:615px;width:121px;height:1px;background:#000;"></div>
</body></html>
